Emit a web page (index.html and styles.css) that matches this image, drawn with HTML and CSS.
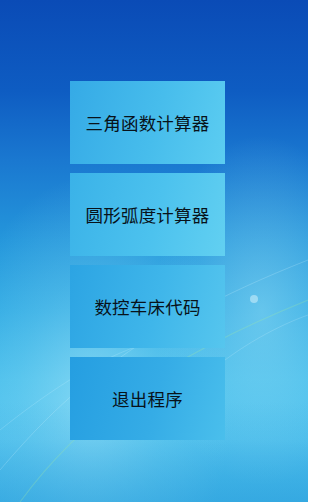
FILE: index.html
```html
<!DOCTYPE html>
<html lang="zh-CN">
<head>
<meta charset="utf-8">
<title>计算器</title>
<link rel="stylesheet" href="styles.css">
</head>
<body>
<div class="screen">
  <svg class="wallpaper" viewBox="0 0 308 502" preserveAspectRatio="none" aria-hidden="true">
    <defs>
      <radialGradient id="glow" cx="0.3" cy="0.8" r="0.45">
        <stop offset="0" stop-color="#b5ecfa" stop-opacity="0.55"/>
        <stop offset="0.55" stop-color="#8fe0f6" stop-opacity="0.25"/>
        <stop offset="1" stop-color="#8fe0f6" stop-opacity="0"/>
      </radialGradient>
      <radialGradient id="glow2" cx="0.85" cy="0.62" r="0.35">
        <stop offset="0" stop-color="#a8e8f8" stop-opacity="0.45"/>
        <stop offset="1" stop-color="#a8e8f8" stop-opacity="0"/>
      </radialGradient>
      <linearGradient id="bottomShade" x1="0" y1="0" x2="0" y2="1">
        <stop offset="0.8" stop-color="#2a9edc" stop-opacity="0"/>
        <stop offset="1" stop-color="#2a9edc" stop-opacity="0.45"/>
      </linearGradient>
    </defs>
    <rect x="0" y="0" width="308" height="502" fill="url(#glow)"/>
    <rect x="0" y="0" width="308" height="502" fill="url(#glow2)"/>
    <rect x="0" y="0" width="308" height="502" fill="url(#bottomShade)"/>
    <path d="M0 470 C 60 400, 130 330, 308 260" stroke="#d8f6ff" stroke-opacity="0.22" stroke-width="1" fill="none"/>
    <path d="M20 502 C 80 420, 160 360, 308 300" stroke="#9fe8a8" stroke-opacity="0.28" stroke-width="1.2" fill="none"/>
    <path d="M0 430 C 50 390, 110 350, 160 340" stroke="#c8f2ff" stroke-opacity="0.22" stroke-width="1" fill="none"/>
    <path d="M200 380 C 240 345, 280 325, 308 315" stroke="#d8f6ff" stroke-opacity="0.2" stroke-width="1" fill="none"/>
    <circle cx="254" cy="299" r="4" fill="#e8fbff" fill-opacity="0.45"/>
    <circle cx="88" cy="424" r="9" fill="#e8fbff" fill-opacity="0.15"/>
  </svg>
  <nav class="menu">
    <button class="tile tile-1" type="button">三角函数计算器</button>
    <button class="tile tile-2" type="button">圆形弧度计算器</button>
    <button class="tile tile-3" type="button">数控车床代码</button>
    <button class="tile tile-4" type="button">退出程序</button>
  </nav>
</div>
</body>
</html>
```

FILE: styles.css
```css
html, body {
  margin: 0;
  padding: 0;
}

body {
  width: 308px;
  height: 502px;
  overflow: hidden;
  font-family: "Noto Sans CJK SC", "Noto Sans", "DejaVu Sans", sans-serif;
}

.screen {
  position: relative;
  width: 308px;
  height: 502px;
  overflow: hidden;
  background: linear-gradient(180deg,
    #0a4bb6 0px,
    #0e5cc2 90px,
    #1a78d0 160px,
    #2496db 240px,
    #2fa9e3 310px,
    #47bdeb 380px,
    #52c3ee 440px,
    #3eb2e6 502px);
}

.wallpaper {
  position: absolute;
  left: 0;
  top: 0;
  width: 308px;
  height: 502px;
}

.menu {
  position: relative;
  display: flex;
  flex-direction: column;
  align-items: flex-start;
  gap: 9px;
  padding-top: 81px;
  padding-left: 70px;
}

.tile {
  width: 155px;
  height: 83px;
  border: 0;
  margin: 0;
  padding: 0;
  font-family: inherit;
  font-size: 17.5px;
  font-weight: 400;
  color: #08121a;
  letter-spacing: 0.2px;
  cursor: pointer;
}

.tile-1 {
  background: linear-gradient(105deg, #35aae6 0%, #47bdec 55%, #5ccdf1 100%);
}

.tile-2 {
  background: linear-gradient(105deg, #3ab2e8 0%, #4cc2ee 55%, #62d0f1 100%);
}

.tile-3 {
  background: linear-gradient(105deg, #2ca4e3 0%, #3fb6ea 55%, #56c6ee 100%);
}

.tile-4 {
  background: linear-gradient(105deg, #259ee1 0%, #35ace6 55%, #4abfec 100%);
}
```
